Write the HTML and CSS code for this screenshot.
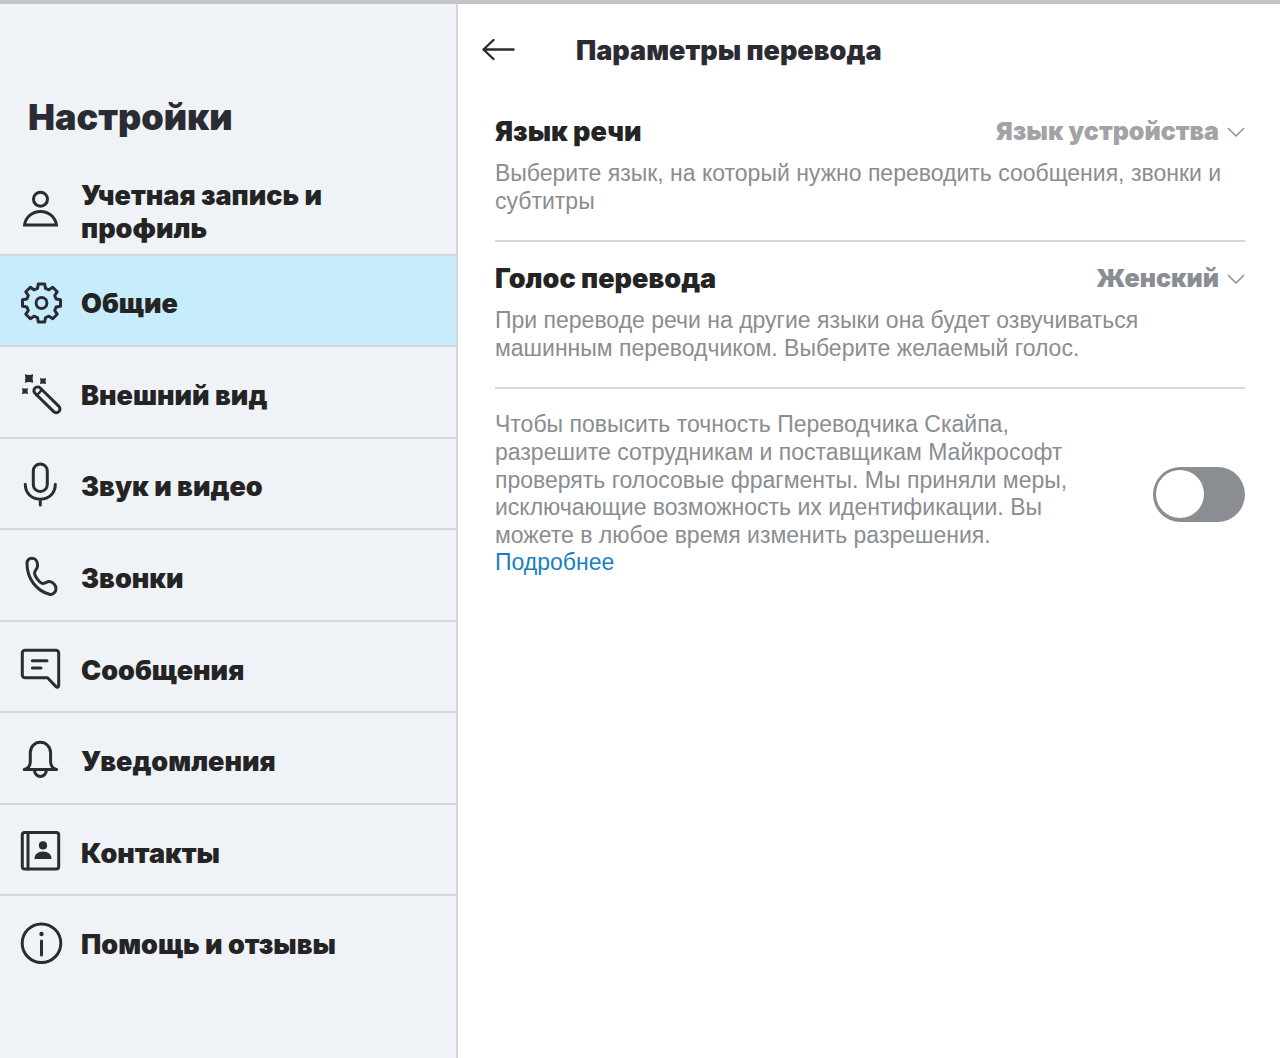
FILE: index.html
```html
<!DOCTYPE html>
<html lang="ru">
<head>
<meta charset="utf-8">
<meta name="viewport" content="width=device-width, initial-scale=1">
<title>Настройки</title>
<link rel="stylesheet" href="styles.css">
</head>
<body>
<div class="window">
  <aside class="sidebar">
    <h1 class="sidebar-title">Настройки</h1>
    <nav>
      <ul class="menu">
        <li><a class="menu-item" href="#account">
          <svg class="icon" viewBox="0 0 42 48" aria-hidden="true"><circle cx="20.5" cy="12.2" r="7"/><path d="M4.6 38C5.5 30.5 12 24.5 20.5 24.5S35.5 30.5 36.4 38Z" stroke-linejoin="miter"/></svg>
          <span>Учетная запись и профиль</span></a></li>
        <li><a class="menu-item active" href="#general" aria-current="page">
          <svg class="icon" viewBox="0 0 42 48" aria-hidden="true"><g transform="translate(21.5 25)"><circle r="5.4"/><path d="M-4-14.6L-3.2-19H3.2L4-14.6L7.5-13.2L11.2-15.7L15.7-11.2L13.2-7.5L14.6-4L19-3.2V3.2L14.6 4L13.2 7.5L15.7 11.2L11.2 15.7L7.5 13.2L4 14.6L3.2 19H-3.2L-4 14.6L-7.5 13.2L-11.2 15.7L-15.7 11.2L-13.2 7.5L-14.6 4L-19 3.2V-3.2L-14.6-4L-13.2-7.5L-15.7-11.2L-11.2-15.7L-7.5-13.2Z"/></g></svg>
          <span>Общие</span></a></li>
        <li><a class="menu-item" href="#appearance">
          <svg class="icon" viewBox="0 0 42 48" aria-hidden="true"><rect x="-3.7" y="-3.7" width="33.6" height="7.4" rx="3.7" transform="translate(17.6 20.6) rotate(44.5)"/><path d="M16.5 25.5L22 19.8" stroke-width="2.4"/><path class="solid" d="M4.8 4.3Q9 5.6 13.2 4.3Q11.9 8.5 13.2 12.7Q9 11.4 4.8 12.7Q6.1 8.5 4.8 4.3ZM20 8Q23 9 26 8Q25 11 26 14Q23 13 20 14Q21 11 20 8ZM2 18Q5 19 8 18Q7 21 8 24Q5 23 2 24Q3 21 2 18Z"/></svg>
          <span>Внешний вид</span></a></li>
        <li><a class="menu-item" href="#media">
          <svg class="icon" viewBox="0 0 42 48" aria-hidden="true"><rect x="13.3" y="3" width="14" height="27.5" rx="7"/><path d="M5.3 23.3C5.3 32 11.5 38.2 20.3 38.2S35.3 32 35.3 23.3M20.3 38.2V44"/></svg>
          <span>Звук и видео</span></a></li>
        <li><a class="menu-item" href="#calls">
          <svg class="icon" viewBox="0 0 42 48" aria-hidden="true"><path d="M7 10.5C7 7 9 5.2 12 5.2C15.5 5.2 17.6 8.5 17.6 12.5C17.6 16.5 14.5 17.5 14.5 20C14.5 23 19 29.3 22 30.3C24.5 31 26.5 28.4 29.5 28.6C33 29 36 32.5 36 35.5C36 39.5 32.5 42 29.5 41.3C17 38 7 26 7 10.5Z"/></svg>
          <span>Звонки</span></a></li>
        <li><a class="menu-item" href="#messages">
          <svg class="icon" viewBox="0 0 42 48" aria-hidden="true"><path d="M5 5.3H36A2.7 2.7 0 0 1 38.7 8V40.8C38.7 42.3 37.2 42.8 36 41.6L27.5 32.8H5A2.7 2.7 0 0 1 2.3 30.1V8A2.7 2.7 0 0 1 5 5.3ZM12.3 15.7H27M12.3 23H21"/></svg>
          <span>Сообщения</span></a></li>
        <li><a class="menu-item" href="#notifications">
          <svg class="icon" viewBox="0 0 42 48" aria-hidden="true"><path d="M4.2 33.4C8.5 32.5 10.3 29.5 10.3 25.5V17C10.3 10.5 14.8 6.3 20.3 6.3S30.6 10.5 30.6 17V25.5C30.6 29.5 32.5 32.5 36.6 33.4ZM14.5 34.5A5.9 5.9 0 0 0 26.3 34.5"/></svg>
          <span>Уведомления</span></a></li>
        <li><a class="menu-item" href="#contacts">
          <svg class="icon" viewBox="0 0 42 48" aria-hidden="true"><rect x="2.3" y="4.5" width="36.4" height="36.4" rx="2.4"/><path d="M8 4.5V40.9"/><path class="solid" d="M14.5 31C14.5 26.5 18 23.6 23 23.6S31.5 26.5 31.5 31Z"/><circle class="solid" cx="23" cy="17.4" r="4.1"/></svg>
          <span>Контакты</span></a></li>
        <li><a class="menu-item" href="#help">
          <svg class="icon" viewBox="0 0 42 48" aria-hidden="true"><circle cx="21.5" cy="24.2" r="19.3"/><path d="M21.5 22V36"/><circle class="solid" cx="21.5" cy="15" r="2.2"/></svg>
          <span>Помощь и отзывы</span></a></li>
      </ul>
    </nav>
  </aside>

  <main class="content">
    <header class="content-header">
      <button class="back" type="button" aria-label="Назад">
        <svg width="34" height="24" viewBox="0 0 34 24" aria-hidden="true"><path d="M31.5 10.5H1.5M11.5 1L1.5 10.5L11.5 20"/></svg>
      </button>
      <h2 class="content-title">Параметры перевода</h2>
    </header>

    <section class="setting">
      <div class="setting-row">
        <label class="setting-name" for="speech-language">Язык речи</label>
        <span class="picker light">
          <select id="speech-language"><option>Язык устройства</option></select>
          <svg width="18" height="12" viewBox="0 0 18 12" aria-hidden="true"><path d="M1 2L9 10L17 2"/></svg>
        </span>
      </div>
      <p class="description">Выберите язык, на который нужно переводить сообщения, звонки и субтитры</p>
    </section>

    <section class="setting">
      <div class="setting-row">
        <label class="setting-name" for="voice">Голос перевода</label>
        <span class="picker">
          <select id="voice"><option>Женский</option></select>
          <svg width="18" height="12" viewBox="0 0 18 12" aria-hidden="true"><path d="M1 2L9 10L17 2"/></svg>
        </span>
      </div>
      <p class="description">При переводе речи на другие языки она будет озвучиваться машинным переводчиком. Выберите желаемый голос.</p>
    </section>

    <section class="consent">
      <p class="description consent-text"><label for="consent">Чтобы повысить точность Переводчика Скайпа, разрешите сотрудникам и поставщикам Майкрософт проверять голосовые фрагменты. Мы приняли меры, исключающие возможность их идентификации. Вы можете в любое время изменить разрешения.</label> <a class="link" href="#more">Подробнее</a></p>
      <input class="switch" id="consent" type="checkbox" role="switch">
    </section>
  </main>
</div>
</body>
</html>
```
FILE: styles.css
```css
* {
  box-sizing: border-box;
}

body {
  margin: 0;
  background: #fff;
  color: #252424;
  font-family: Inter, "Noto Sans", sans-serif;
  font-size: 27px;
  font-weight: 900;
}

.window {
  display: flex;
  min-height: 100vh;
  border-top: 4px solid #c4c4c4;
}

/* Sidebar */

.sidebar {
  flex: 0 0 458px;
  border-right: 2px solid #d3d7dc;
  background: #eff3f8;
}

.sidebar-title {
  margin: 0;
  padding: 91px 28px 25px;
  color: #2b2c33;
  font-size: 36px;
  font-weight: 900;
  line-height: 44px;
}

.menu {
  display: grid;
  grid-auto-rows: 1fr;
  min-height: 824px;
  margin: 0;
  padding: 0;
  list-style: none;
}

.menu li {
  display: grid;
  border-bottom: 2px solid #d3d7dc;
}

.menu li:last-child {
  border-bottom-color: transparent;
}

.menu-item {
  display: flex;
  align-items: center;
  gap: 19px;
  padding: 4px 60px 0 20px;
  color: inherit;
  line-height: 33px;
  text-decoration: none;
}

.menu-item span {
  padding-top: 3px;
}

.menu-item.active {
  background: #c7edfc;
}

.icon {
  flex: none;
  width: 42px;
  height: 48px;
  overflow: visible;
  fill: none;
  stroke: #2b2c33;
  stroke-width: 3;
  stroke-linecap: round;
  stroke-linejoin: round;
}

.icon .solid {
  fill: #2b2c33;
  stroke: none;
}

/* Content */

.content {
  flex: 1;
  min-width: 0;
  padding: 25px 35px 24px 37px;
}

.content-header {
  display: flex;
  align-items: center;
  gap: 60px;
  margin-bottom: 32px;
  margin-left: -13px;
}

.back {
  display: flex;
  padding: 0;
  border: 0;
  background: none;
}

.back svg {
  fill: none;
  stroke: #2b2c33;
  stroke-width: 2.4;
  stroke-linecap: round;
  stroke-linejoin: round;
}

.content-title {
  margin: 0;
  color: #2b2c33;
  font-size: 27px;
  font-weight: 900;
  line-height: 44px;
}

.setting {
  padding: 20px 0 25px;
  border-bottom: 2px solid #d6d7d9;
}

.setting:first-of-type {
  padding-top: 10px;
}

.setting-row {
  display: flex;
  align-items: center;
  justify-content: space-between;
  margin-bottom: 12px;
  line-height: 33px;
}

.picker {
  display: flex;
  align-items: center;
  gap: 8px;
  color: #8a8d91;
  font-size: 25px;
}

.picker.light {
  color: #a1a3a6;
}

.picker select {
  field-sizing: content;
  height: 33px;
  padding: 0;
  border: 0;
  appearance: none;
  background: none;
  color: inherit;
  font: inherit;
  text-align-last: right;
}

.picker svg {
  fill: none;
  stroke: #8a8d91;
  stroke-width: 1.5;
}

.description {
  margin: 0;
  color: #8a8d91;
  font-family: "Liberation Sans", Arial, sans-serif;
  font-size: 23px;
  font-weight: 400;
  line-height: 1.2;
}

.consent {
  display: flex;
  align-items: center;
  justify-content: space-between;
  padding-top: 22px;
}

.consent-text {
  max-width: 580px;
}

.link {
  color: #1a7fc1;
  text-decoration: none;
}

.switch {
  display: flex;
  flex: none;
  align-items: center;
  width: 92px;
  height: 55px;
  margin: 0;
  padding: 3px;
  border-radius: 28px;
  appearance: none;
  background: #8a8d91;
}

.switch::before {
  content: "";
  width: 48px;
  height: 48px;
  border-radius: 50%;
  background: #fff;
}

.switch:checked {
  justify-content: flex-end;
  background: #0078d4;
}
```
